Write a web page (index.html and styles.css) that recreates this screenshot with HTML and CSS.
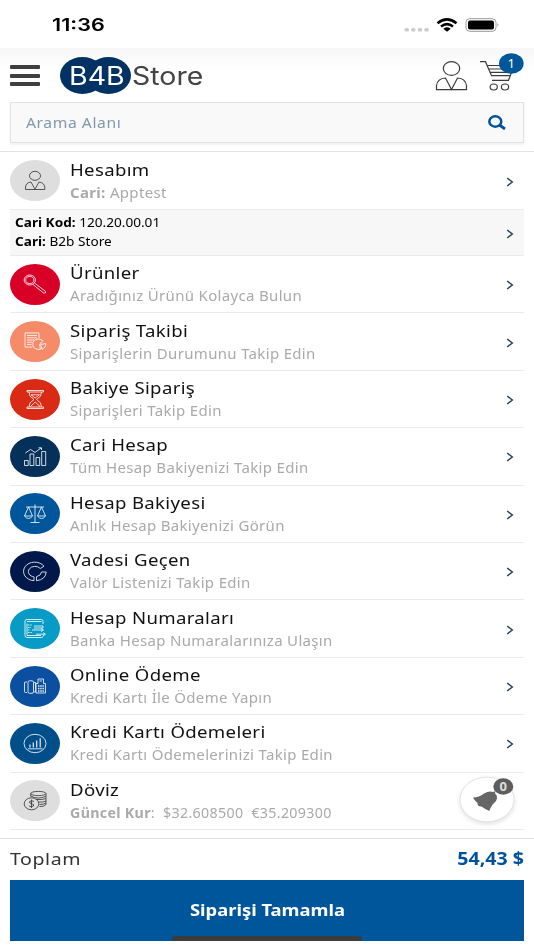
FILE: index.html
```html
<!DOCTYPE html>
<html lang="tr">
<head>
<meta charset="utf-8">
<title>B4B Store</title>
<link rel="stylesheet" href="styles.css">
</head>
<body>
<div class="status">
  <span class="clock"><b class="fit">11:36</b></span>
  <svg class="status-icons" width="96" height="18" viewBox="0 0 96 18">
    <g fill="#ccc"><rect x="0.5" y="12" width="4.5" height="3.6" rx="1.6"/><rect x="7" y="12" width="4.5" height="3.6" rx="1.6"/><rect x="13.700" y="12" width="4.500" height="3.600" rx="1.600"/><rect x="20.300" y="12" width="4.500" height="3.600" rx="1.600"/></g>
    <g fill="none" stroke="#000" stroke-width="2.500"><path d="M33.500 7.200Q43 -0.500 52.500 7.200"/><path d="M37 10.500Q43 5.700 49 10.500"/></g><path d="M39.300 12.700Q43 10 46.700 12.700L43 15.700Z"/>
    <rect x="62" y="2.700" width="30" height="12.600" rx="3.800" fill="none" stroke="#999" stroke-width="1"/><rect x="64" y="4.600" width="26" height="8.800" rx="2"/><path d="M93.500 7.300q2 1.700 0 3.400z" fill="#999"/>
  </svg>
</div>
<header class="header">
  <div class="burger"><i></i><i></i><i></i></div>
  <div class="logo">
    <svg class="logo-bg" width="71" height="37" viewBox="0 0 71 37"><g fill="#023163"><ellipse cx="22.500" cy="18.500" rx="22.500" ry="18.500"/><ellipse cx="48.500" cy="18.500" rx="22.500" ry="18.500"/></g></svg>
    <span class="logo-mark"><span class="fit">B4B</span></span><span class="logo-name"><span class="fit">Store</span></span>
  </div>
  <svg class="tools" width="90" height="44" viewBox="0 0 90 44">
    <g fill="none" stroke="#3c3c3c" stroke-width="1.200">
      <ellipse cx="17.500" cy="16.500" rx="8.200" ry="6.900"/>
      <path d="M2.500 37.700V33.500Q3.500 26.500 11.500 26L17.500 37.500L23.500 26Q31.500 26.500 32.500 33.500V37.700Z"/>
      <path d="M46 9.700H51.500L57.500 23.700H76.500M53 13.500H80M54.500 17H79M56 20.400H78M58 28.300H74.500L80 13.500"/>
      <ellipse cx="59.700" cy="35" rx="3.600" ry="3"/><ellipse cx="71" cy="35" rx="3.600" ry="3"/>
    </g>
    <ellipse cx="77.300" cy="11.500" rx="12.300" ry="10.200" fill="#00569b"/>
    <text x="77.300" y="16" text-anchor="middle" class="cart-count">1</text>
  </svg>
</header>
<div class="search">
  <span class="fit">Arama Alanı</span>
  <svg width="18" height="15" viewBox="0 0 18 15"><g fill="none" stroke="#00529c" stroke-width="2.500"><ellipse cx="7.300" cy="6.500" rx="6" ry="5.200"/><path d="M11.500 10L17 14" stroke-width="2.800"/></g></svg>
</div>
<main class="list">
  <a class="row">
    <svg class="ico" viewBox="0 0 50 41"><ellipse class="bg c1" cx="25" cy="20.500" rx="25" ry="20.500"/><g class="dark"><ellipse cx="25" cy="15.800" rx="5.500" ry="4.500"/><path d="M15.500 29.500V27Q16 22.500 21 22L25 29.200L29 22Q34 22.500 34.800 27V29.500Z"/></g></svg>
    <div class="txt"><h2><span class="fit">Hesabım</span></h2><p><span class="fit"><b>Cari:</b> Apptest</span></p></div>
    <svg class="chev" viewBox="0 0 8 10"><path d="M1.200 1L6.300 5L1.200 9"/></svg>
  </a>
  <a class="row account">
    <div class="info"><p><span class="fit"><b>Cari Kod:</b> 120.20.00.01</span></p><p><span class="fit"><b>Cari:</b> B2b Store</span></p></div>
    <svg class="chev" viewBox="0 0 8 10"><path d="M1.200 1L6.300 5L1.200 9"/></svg>
  </a>
  <a class="row">
    <svg class="ico" viewBox="0 0 50 41"><ellipse class="bg c2" cx="25" cy="20.500" rx="25" ry="20.500"/><g class="line"><ellipse cx="19.800" cy="16" rx="5.700" ry="5"/><ellipse cx="19.800" cy="16" rx="4.100" ry="3.500"/><path d="M23 20.500L33.500 29Q36.500 29.500 35.500 27.300L24.700 19.200"/></g></svg>
    <div class="txt"><h2><span class="fit">Ürünler</span></h2><p><span class="fit">Aradığınız Ürünü Kolayca Bulun</span></p></div>
    <svg class="chev" viewBox="0 0 8 10"><path d="M1.200 1L6.300 5L1.200 9"/></svg>
  </a>
  <a class="row">
    <svg class="ico" viewBox="0 0 50 41"><ellipse class="bg c3" cx="25" cy="20.500" rx="25" ry="20.500"/><g class="line"><path d="M22.500 26H15V12H29V17M17 14.500H27M17 16.800H27M17 19H24M17 21.200H22M17 23.400H21.500"/><path d="M29.500 23.500L33 19.500Q29 16.800 25 18.700Q21.500 21 23 25Q25 29 30.500 28.300Z"/><path d="M30.500 23.500L32 28.300Q36 26.500 35.700 22.500Z"/></g></svg>
    <div class="txt"><h2><span class="fit">Sipariş Takibi</span></h2><p><span class="fit">Siparişlerin Durumunu Takip Edin</span></p></div>
    <svg class="chev" viewBox="0 0 8 10"><path d="M1.200 1L6.300 5L1.200 9"/></svg>
  </a>
  <a class="row">
    <svg class="ico" viewBox="0 0 50 41"><ellipse class="bg c4" cx="25" cy="20.500" rx="25" ry="20.500"/><g class="line"><path d="M17 11.500H33.500V13H17ZM17 28H33.500V29.500H17ZM19 13Q18.500 17.500 24 20.500Q18.500 23.500 19 28M31.500 13Q32 17.500 26.500 20.500Q32 23.500 31.500 28M21 15.800H29.500L25.200 19ZM20.500 27.500L25.200 23L30 27.500"/></g></svg>
    <div class="txt"><h2><span class="fit">Bakiye Sipariş</span></h2><p><span class="fit">Siparişleri Takip Edin</span></p></div>
    <svg class="chev" viewBox="0 0 8 10"><path d="M1.200 1L6.300 5L1.200 9"/></svg>
  </a>
  <a class="row">
    <svg class="ico" viewBox="0 0 50 41"><ellipse class="bg c5" cx="25" cy="20.500" rx="25" ry="20.500"/><g class="line"><path d="M14.500 24.500H18.200V29.500H14.500ZM20 18H23.800V29.500H20ZM26 21.500H29.700V29.500H26ZM31.700 15.500H35.700V29.500H31.700ZM15.300 17L20.500 13.500L25 16.500L31 12M28.500 11.800H31.500V14"/></g></svg>
    <div class="txt"><h2><span class="fit">Cari Hesap</span></h2><p><span class="fit">Tüm Hesap Bakiyenizi Takip Edin</span></p></div>
    <svg class="chev" viewBox="0 0 8 10"><path d="M1.200 1L6.300 5L1.200 9"/></svg>
  </a>
  <a class="row">
    <svg class="ico" viewBox="0 0 50 41"><ellipse class="bg c6" cx="25" cy="20.500" rx="25" ry="20.500"/><g class="line"><path d="M25 11.500V29.500M20.500 29.500H29.500M16 14H34M18.500 14L14.500 23H22.500ZM31.500 14L27.500 23H35.500ZM14.500 23Q18.500 28 22.500 23M27.500 23Q31.500 28 35.500 23"/></g></svg>
    <div class="txt"><h2><span class="fit">Hesap Bakiyesi</span></h2><p><span class="fit">Anlık Hesap Bakiyenizi Görün</span></p></div>
    <svg class="chev" viewBox="0 0 8 10"><path d="M1.200 1L6.300 5L1.200 9"/></svg>
  </a>
  <a class="row">
    <svg class="ico" viewBox="0 0 50 41"><ellipse class="bg c7" cx="25" cy="20.500" rx="25" ry="20.500"/><g class="line"><path d="M34 15.200A11.200 9.300 0 1 0 24 29.700V25.900A6.600 5.300 0 1 1 30.300 17.500Z"/><path d="M31.600 21H36.200Q35.700 28.500 26.500 29.700V25.700Q31 24.700 31.600 21Z"/></g></svg>
    <div class="txt"><h2><span class="fit">Vadesi Geçen</span></h2><p><span class="fit">Valör Listenizi Takip Edin</span></p></div>
    <svg class="chev" viewBox="0 0 8 10"><path d="M1.200 1L6.300 5L1.200 9"/></svg>
  </a>
  <a class="row">
    <svg class="ico" viewBox="0 0 50 41"><ellipse class="bg c8" cx="25" cy="20.500" rx="25" ry="20.500"/><g class="line"><path d="M33 16V13Q33 11.500 31.500 11.500H17Q15 11.500 15 13V27.500Q15 29.500 17 29.500H31.500Q33 29.500 33 28M17 13.500H31.500M17 15.500V27.500H31M24 18H33V20H24M22 22H33M26 26.200H35M31 20.500L33.500 22L31 23.500M33 24.700L35.500 26.200L33 27.700"/><path d="M18 17H22M18 19.500H21M18 22H20M18 24.500H22" stroke-dasharray="1.500 .8"/></g></svg>
    <div class="txt"><h2><span class="fit">Hesap Numaraları</span></h2><p><span class="fit">Banka Hesap Numaralarınıza Ulaşın</span></p></div>
    <svg class="chev" viewBox="0 0 8 10"><path d="M1.200 1L6.300 5L1.200 9"/></svg>
  </a>
  <a class="row">
    <svg class="ico" viewBox="0 0 50 41"><ellipse class="bg c9" cx="25" cy="20.500" rx="25" ry="20.500"/><g class="line"><path d="M17 16H15Q14.500 16 14.500 17V25.500Q14.500 26.500 15.500 26.500H17M24 16.500H25.500V26H24M26 17.500H28V13H33.500V17.500H35.500V27H26ZM29.500 15H32"/><rect x="18" y="14.800" width="5.500" height="12.500" rx="1.500"/><path d="M28 20H34M28 22.500H34M28 25H34" stroke-width="1.500" stroke-dasharray="1.500 .7"/></g></svg>
    <div class="txt"><h2><span class="fit">Online Ödeme</span></h2><p><span class="fit">Kredi Kartı İle Ödeme Yapın</span></p></div>
    <svg class="chev" viewBox="0 0 8 10"><path d="M1.200 1L6.300 5L1.200 9"/></svg>
  </a>
  <a class="row">
    <svg class="ico" viewBox="0 0 50 41"><ellipse class="bg c10" cx="25" cy="20.500" rx="25" ry="20.500"/><g class="line"><ellipse cx="25" cy="20.500" rx="11" ry="9.200"/><path d="M18 25.800H32.500"/><path d="M20 24.500V21.500M23.300 24.500V19.500M26.700 24.500V17.500M30.200 24.500V15.300" stroke-width="1.200"/></g></svg>
    <div class="txt"><h2><span class="fit">Kredi Kartı Ödemeleri</span></h2><p><span class="fit">Kredi Kartı Ödemelerinizi Takip Edin</span></p></div>
    <svg class="chev" viewBox="0 0 8 10"><path d="M1.200 1L6.300 5L1.200 9"/></svg>
  </a>
  <a class="row">
    <svg class="ico" viewBox="0 0 50 41"><ellipse class="bg c1" cx="25" cy="20.500" rx="25" ry="20.500"/><g class="dark"><ellipse cx="28.300" cy="13.500" rx="7.600" ry="2.100"/><path d="M20.700 13.500V16.500M36 13.500V24.500Q33.500 27 29.500 26.500M20.700 16Q28 20 36 16.200M26 19.500Q32.500 20 36 18.500M28.500 22Q33 22.500 36 21M29.500 24.500Q33.500 24.500 36 23"/><ellipse cx="21.500" cy="23.800" rx="7.300" ry="6"/><path d="M24 21.500Q21.500 20 19.700 21.500Q18.700 23.300 21.500 23.700Q24.500 24.200 23.500 26Q21.500 27.500 19 26M21.500 19.500V28"/></g></svg>
    <div class="txt"><h2><span class="fit">Döviz</span></h2><p class="rates"><span class="fit"><b>Güncel Kur</b>:&nbsp; $32.608500&nbsp; €35.209300</span></p></div>
  </a>
</main>
<footer class="footer">
  <div class="total"><span class="fit">Toplam</span><b class="fit price">54,43 $</b></div>
  <div class="order"><span class="fit">Siparişi Tamamla</span></div>
</footer>
<div class="home"></div>
<svg class="bell" width="66" height="58" viewBox="0 0 66 58">
  <ellipse class="bell-bg" cx="33" cy="28.500" rx="27" ry="22.300"/>
  <path fill="#666" d="M19 26.500Q25 26.500 30 22.500Q35 19.500 39 21L41.500 20L41 22.500Q44.500 25.500 42 30Q36.500 35 35.500 40Q32 39 27.500 35.500Q23.500 36 23.500 32Q20 29 19 26.500Z"/>
  <ellipse cx="49.300" cy="15.500" rx="10" ry="8.200" fill="#5d5d5d"/>
  <text x="49.300" y="20" text-anchor="middle" class="bell-count">0</text>
</svg>
</body>
</html>
```
FILE: styles.css
```css
* { box-sizing: border-box; }
body { margin: 0; width: 534px; height: 950px; overflow: hidden; position: relative; background: #fff; font-family: "Noto Sans", sans-serif; color: #000; display: flex; flex-direction: column; }
h2, p { margin: 0; font-weight: 400; }
.fit { display: inline-block; white-space: nowrap; transform-origin: 0 50%; }

.status { height: 48px; flex: none; display: flex; justify-content: space-between; padding: 16px 34px 0 52px; }
.clock { font: 700 17px/19px Inter, sans-serif; }
.clock .fit { font-weight: 600; transform: scaleX(1.270); }
.status-icons { display: block; }

.header { height: 54px; flex: none; display: flex; align-items: flex-start; padding: 5px 10px 0; background: linear-gradient(#f6f6f6, #fff 22px); }
.burger { width: 30px; margin-top: 12px; display: grid; gap: 4.500px; }
.burger i { height: 4px; background: #3f3f3f; border-radius: 1px; }
.logo { position: relative; display: flex; margin: 3.500px 0 0 20px; height: 38px; font: 25px/38px Inter, sans-serif; }
.logo-bg { position: absolute; left: 0; top: 0; }
.logo-mark { position: relative; width: 72px; padding-left: 9px; color: #fff; }
.logo-name { color: #444; }
.logo-mark .fit, .logo-name .fit { transform: scaleX(1.140); }
.tools { margin-left: auto; margin-top: -1.500px; }
.cart-count { font: 13px "Noto Sans", sans-serif; fill: #fff; }

.search { flex: none; height: 41px; margin: 0 10px; padding: 0 17px 0 15px; display: flex; align-items: center; justify-content: space-between; background: #f9f9f9; border: 1px solid #e2e2e2; box-shadow: 0 2px 3px rgba(0,0,0,.06); color: #8098b0; font-size: 14px; letter-spacing: .5px; }
.search .fit { transform: scaleX(1.120); }

.list { flex: none; margin-top: 8px; border-top: 1px solid #e2e2e2; border-bottom: 1px solid #e2e2e2; padding: .700px 10px 0; height: 688px; }
.row { height: 57.400px; display: flex; align-items: center; border-bottom: 1px solid #ebebeb; padding-right: 10px; }
.ico { width: 50px; height: 41px; flex: none; margin-right: 10px; }
.c1 { fill: #dedede; } .c2 { fill: #d80027; } .c3 { fill: #f68b69; } .c4 { fill: #d92a15; } .c5 { fill: #05305a; }
.c6 { fill: #00569b; } .c7 { fill: #00194a; } .c8 { fill: #079bc5; } .c9 { fill: #0b4fa0; } .c10 { fill: #004f8b; }
.line { fill: none; stroke: #fff; stroke-width: .9; opacity: .9; }
.dark { fill: none; stroke: #444; stroke-width: .9; }
.txt { flex: 1; min-width: 0; padding-top: 1px; }
.txt h2 { font-size: 16.500px; line-height: 24px; letter-spacing: .3px; color: #111; }
.txt p { font-size: 13.500px; line-height: 23px; letter-spacing: .3px; color: #aaa; }
.txt h2 .fit { transform: scaleX(1.127); }
.txt p .fit { transform: scaleX(1.110); }
.txt .rates .fit { transform: scaleX(1.055); }
.chev { width: 8px; height: 10px; margin-top: 2px; fill: none; stroke: #29425c; stroke-width: 1.500; }
.account { height: 46px; background: #f7f7f7; padding-left: 5px; }
.info { flex: 1; }
.info p { font-size: 12px; line-height: 18.400px; }
.info .fit { transform: scaleX(1.135); }

.footer { flex: none; padding: 0 10px; }
.total { height: 41px; padding-bottom: 2px; display: flex; align-items: center; justify-content: space-between; font-size: 17px; color: #333; letter-spacing: .5px; }
.total .fit { transform: scaleX(1.150); }
.total .price { color: #00529c; letter-spacing: 0; transform-origin: 100% 50%; }
.order { height: 61px; padding-bottom: 2px; display: flex; align-items: center; justify-content: center; background: #00569b; color: #fff; font-weight: 700; font-size: 16px; }
.order .fit { transform: scaleX(1.150); transform-origin: 50% 50%; }
.home { position: absolute; left: 172px; top: 936px; width: 190px; height: 5px; border-radius: 3px 3px 0 0; background: #3c3c3c; }
.bell { position: absolute; left: 453.500px; top: 770.500px; }
.bell-bg { fill: #fff; stroke: #e2e2e2; filter: drop-shadow(0 2px 2px rgba(0,0,0,.12)); }
.bell-count { font: 700 13px "Noto Sans", sans-serif; fill: #ddd; }
```
